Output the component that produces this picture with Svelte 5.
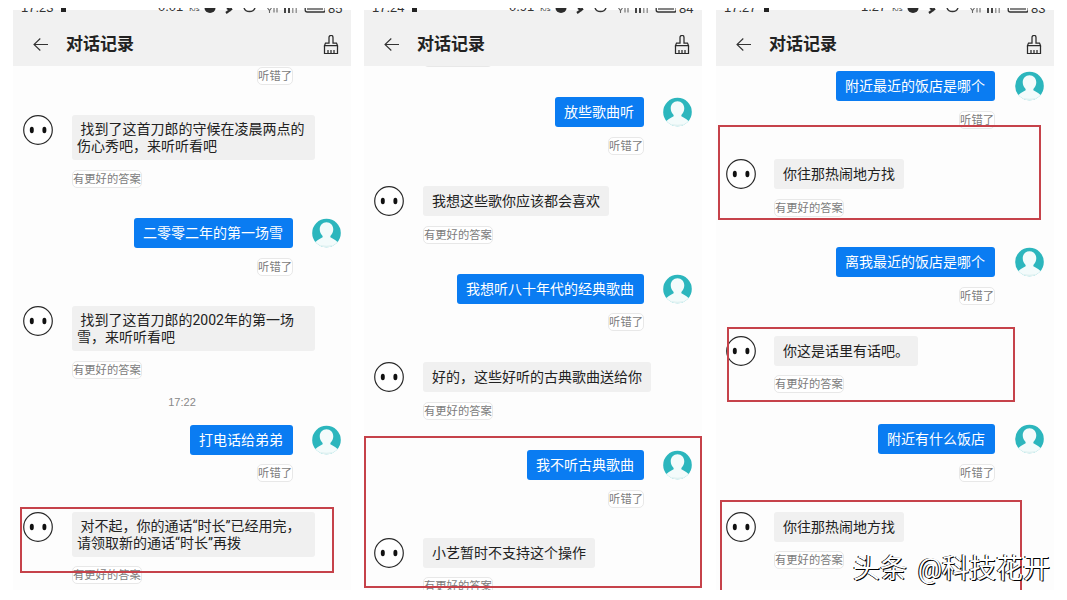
<script>
	// three chat log screenshots side by side
	const tagUser = '听错了';
	const tagBot = '有更好的答案';

	const panels = [
		{
			clock: '17:23',
			speed: '0.01',
			battery: '85',
			items: [
				{ kind: 'tag', side: 'user', gap: 1 },
				{ kind: 'bot', text: ' 找到了这首刀郎的守候在凌晨两点的伤心秀吧，来听听看吧', gap: 30, wide: true },
				{ kind: 'tag', side: 'bot', gap: 10 },
				{ kind: 'user', text: '二零零二年的第一场雪', gap: 30 },
				{ kind: 'tag', side: 'user', gap: 10 },
				{ kind: 'bot', text: ' 找到了这首刀郎的2002年的第一场雪，来听听看吧', gap: 30, wide: true },
				{ kind: 'tag', side: 'bot', gap: 10 },
				{ kind: 'time', text: '17:22', gap: 17 },
				{ kind: 'user', text: '打电话给弟弟', gap: 16 },
				{ kind: 'tag', side: 'user', gap: 9 },
				{ kind: 'bot', text: ' 对不起，你的通话“时长”已经用完，请领取新的通话“时长”再拨', gap: 30, wide: true },
				{ kind: 'tag', side: 'bot', gap: 9 }
			],
			boxes: [{ x: 7, y: 441, w: 314, h: 66 }]
		},
		{
			clock: '17:24',
			speed: '0.91',
			battery: '84',
			items: [
				{ kind: 'tag', side: 'bot', gap: -17 },
				{ kind: 'user', text: '放些歌曲听', gap: 30 },
				{ kind: 'tag', side: 'user', gap: 10 },
				{ kind: 'bot', text: '我想这些歌你应该都会喜欢', gap: 31 },
				{ kind: 'tag', side: 'bot', gap: 10 },
				{ kind: 'user', text: '我想听八十年代的经典歌曲', gap: 30 },
				{ kind: 'tag', side: 'user', gap: 9 },
				{ kind: 'bot', text: '好的，这些好听的古典歌曲送给你', gap: 31 },
				{ kind: 'tag', side: 'bot', gap: 10 },
				{ kind: 'user', text: '我不听古典歌曲', gap: 30 },
				{ kind: 'tag', side: 'user', gap: 10 },
				{ kind: 'bot', text: '小艺暂时不支持这个操作', gap: 30 },
				{ kind: 'tag', side: 'bot', gap: 9 }
			],
			boxes: [{ x: 0, y: 370, w: 338, h: 152 }]
		},
		{
			clock: '17:27',
			speed: '1.27',
			battery: '83',
			items: [
				{ kind: 'user', text: '附近最近的饭店是哪个', gap: 5 },
				{ kind: 'tag', side: 'user', gap: 10 },
				{ kind: 'bot', text: '你往那热闹地方找', gap: 30 },
				{ kind: 'tag', side: 'bot', gap: 10 },
				{ kind: 'user', text: '离我最近的饭店是哪个', gap: 30 },
				{ kind: 'tag', side: 'user', gap: 10 },
				{ kind: 'bot', text: '你这是话里有话吧。', gap: 31 },
				{ kind: 'tag', side: 'bot', gap: 9 },
				{ kind: 'user', text: '附近有什么饭店', gap: 31 },
				{ kind: 'tag', side: 'user', gap: 10 },
				{ kind: 'bot', text: '你往那热闹地方找', gap: 30 },
				{ kind: 'tag', side: 'bot', gap: 9 }
			],
			boxes: [
				{ x: 2, y: 59, w: 323, h: 95 },
				{ x: 11, y: 261, w: 288, h: 75 },
				{ x: 4, y: 434, w: 302, h: 100 }
			]
		}
	];
</script>

{#snippet botFace()}
	<svg class="avatar bot-face" viewBox="0 0 30 30" aria-hidden="true">
		<circle cx="15" cy="15" r="14.3" fill="#fff" stroke="#2a2a2a" stroke-width="1.2" />
		<ellipse cx="8.8" cy="15" rx="2" ry="3.2" fill="#111" />
		<ellipse cx="21.4" cy="15" rx="2" ry="3.2" fill="#111" />
	</svg>
{/snippet}

{#snippet userFace()}
	<svg class="avatar user-face" viewBox="0 0 30 30" aria-hidden="true">
		<circle cx="15" cy="15" r="14.8" fill="#2cb6bd" />
		<path d="M15 3.800c-4 0-7 3-7 7.400 0 2.800 1.200 5.200 3 6.800v1.500c-1.500 1.200-4.500 2-7.500 4.800a14.800 14.800 0 0 0 23 0c-3-2.800-6-3.600-7.500-4.800V18c1.800-1.600 3-4 3-6.800 0-4.400-3-7.400-7-7.400z" fill="#f3fbfb" />
		<path d="M6.500 27a14.800 14.800 0 0 0 17 0c-5 1.500-12 1.500-17 0z" fill="#dff1f1" />
	</svg>
{/snippet}

<main class="page">
	{#each panels as panel}
		<section class="phone">
			<header class="bar">
				<div class="status">
					<span class="clock">{panel.clock}<i class="lock"></i></span>
					<span class="speed">{panel.speed}<small>K/s</small></span>
					<svg class="icons" viewBox="0 0 125 6" aria-hidden="true">
						<ellipse cx="10" cy="0" rx="5.500" ry="5" fill="#2b2b2b" />
						<path d="M26 5l6-4.500M27 0l4 2.500" stroke="#2b2b2b" stroke-width="2.200" fill="none" />
						<path d="M44 0a5.800 5.200 0 0 0 11 0" stroke="#333" stroke-width="1.400" fill="none" />
						<path d="M67.500 0l2 2.500 2-2.500M69.500 3v2M74 0v4.500M77 0v4.500" stroke="#666" stroke-width="1.100" fill="none" />
						<path d="M84 0h2v5h-2zM88 0h2v5h-2z" fill="#444" />
						<path d="M92 0h1.500v5H92zM95.500 0H97v5h-1.500z" fill="#999" />
						<path d="M105.700 0v2a2 2 0 0 0 2 2h16a2 2 0 0 0 2-2V0" fill="none" stroke="#333" stroke-width="1.300" transform="translate(-.5)" />
						<path d="M107 1h16" stroke="#333" stroke-width="1.200" />
					</svg>
					<span class="battery">{panel.battery}</span>
				</div>
				<div class="title-row">
					<svg class="back" viewBox="0 0 15 13" aria-hidden="true">
						<path d="M15 6.500H1M7.300.5 1 6.500l6.300 6" fill="none" stroke="#333" stroke-width="1.100" />
					</svg>
					<h1>对话记录</h1>
					<svg class="broom" viewBox="0 0 16 19" aria-hidden="true">
						<path d="M6 8V2.400a2 2 0 0 1 4 0V8h3.500l1 2.500H1.500l1-2.500zM1.500 10.500v8h13v-8M5 18.500V15M8 18.500V15M11 18.500V15" fill="none" stroke="#2a2a2a" stroke-width="1.250" />
					</svg>
				</div>
			</header>

			<div class="log">
				{#each panel.items as item}
					{#if item.kind === 'tag'}
						<div class="tag-row {item.side}" style="margin-top: {item.gap}px">
							<span class="tag">{item.side === 'user' ? tagUser : tagBot}</span>
						</div>
					{:else if item.kind === 'time'}
						<div class="time" style="margin-top: {item.gap}px">{item.text}</div>
					{:else if item.kind === 'user'}
						<div class="msg user" style="margin-top: {item.gap}px">
							<div class="bubble">{item.text}</div>
							{@render userFace()}
						</div>
					{:else}
						<div class="msg bot" style="margin-top: {item.gap}px">
							{@render botFace()}
							<div class="bubble" class:wide={item.wide}>{item.text}</div>
						</div>
					{/if}
				{/each}

				{#each panel.boxes as box}
					<div class="mark" style="left: {box.x}px; top: {box.y}px; width: {box.w}px; height: {box.h}px"></div>
				{/each}
			</div>
		</section>
	{/each}

	<div class="watermark">头条 @科技花开</div>
</main>

<style>
	:global(body) {
		margin: 0;
		background: #fff;
	}

	.page {
		position: relative;
		width: 1067px;
		height: 600px;
		overflow: hidden;
		display: flex;
		padding-left: 13px;
		gap: 13px;
		box-sizing: border-box;
		font-family: Roboto, "Noto Sans CJK SC", sans-serif;
		color: #222;
	}

	.phone {
		width: 338px;
		height: 590px;
		padding-top: 10px;
		box-sizing: border-box;
		display: flex;
		flex-direction: column;
		flex-shrink: 0;
	}

	.phone:last-of-type {
		margin-left: 1px;
	}

	.phone:last-of-type .msg.bot {
		gap: 18px;
	}

	.phone:last-of-type .msg.user {
		gap: 20px;
	}

	.phone:last-of-type .tag-row.bot {
		padding-left: 58px;
	}

	.phone:last-of-type .tag-row.user {
		padding-right: 59px;
	}

	.bar {
		height: 56px;
		flex-shrink: 0;
		background: #f1f1f1;
		position: relative;
		z-index: 1;
	}

	/* only the lower edge of the status bar survives the crop */
	.status {
		height: 6px;
		margin-top: -2px;
		overflow: hidden;
		display: flex;
		align-items: flex-end;
		padding-left: 8px;
		font-family: "Liberation Sans", sans-serif;
		font-size: 13px;
		line-height: 6px;
		color: #333;
		position: relative;
	}

	.clock,
	.speed,
	.battery {
		transform: translateY(-2px);
		white-space: nowrap;
	}

	.clock {
		width: 137px;
	}

	.lock {
		display: inline-block;
		width: 5px;
		height: 8px;
		margin-left: 7px;
		background: #222;
	}

	.speed {
		width: 50px;
		margin-right: -8px;
	}

	.speed small {
		font-size: 7px;
		margin-left: 6px;
	}

	.icons {
		width: 125px;
		height: 6px;
		flex-shrink: 0;
		margin-right: 3px;
	}

	.title-row {
		display: flex;
		align-items: center;
		height: 24px;
		margin-top: 18px;
		padding: 0 12px 0 20px;
	}

	.back {
		width: 15px;
		height: 13px;
	}

	.title-row h1 {
		margin: 0 0 0 18px;
		flex: 1;
		font-size: 17px;
		line-height: 24px;
		font-weight: 700;
		color: #222;
	}

	.broom {
		width: 16px;
		height: 19px;
	}

	.log {
		position: relative;
		flex: 1;
		min-height: 0;
		overflow: hidden;
		background: #fdfdfd;
		display: flex;
		flex-direction: column;
	}

	.msg {
		display: flex;
		align-items: flex-start;
		flex-shrink: 0;
	}

	.msg.bot {
		padding-left: 10px;
		gap: 19px;
	}

	.msg.user {
		justify-content: flex-end;
		padding-right: 10px;
		gap: 19px;
	}

	.avatar {
		height: 30px;
		flex-shrink: 0;
	}

	.bot-face {
		width: 30px;
	}

	.user-face {
		width: 29px;
	}

	.bubble {
		font-size: 14px;
		line-height: 17px;
		padding: 7px 9px 6px;
		border-radius: 3px;
		box-sizing: border-box;
		white-space: pre-wrap;
	}

	.bot .bubble {
		background: #f0f0f0;
		color: #222;
	}

	.bot .bubble.wide {
		width: 243px;
		padding: 6px 5px 5px;
	}

	.user .bubble {
		background: #0a7cf2;
		color: #fff;
		padding-right: 10px;
	}

	.tag-row {
		display: flex;
		flex-shrink: 0;
	}

	.tag-row.user {
		justify-content: flex-end;
		padding-right: 58px;
	}

	.tag-row.bot {
		padding-left: 59px;
	}

	.tag {
		height: 18px;
		box-sizing: border-box;
		border: 1px solid #e8e8e8;
		border-radius: 5px;
		font-size: 11.300px;
		line-height: 18px;
		color: #7c7c7c;
		background: #fff;
		white-space: nowrap;
	}

	.time {
		text-align: center;
		font-family: "Liberation Sans", sans-serif;
		font-size: 11px;
		line-height: 13px;
		color: #888;
		flex-shrink: 0;
	}

	.mark {
		position: absolute;
		box-sizing: border-box;
		border: 2px solid #c6424a;
		pointer-events: none;
	}

	.watermark {
		position: absolute;
		right: 17px;
		top: 553px;
		font-size: 27px;
		line-height: 32px;
		word-spacing: 4px;
		color: #fff;
		white-space: nowrap;
		text-shadow: 1px 1px 0 #000, -1px 0 0 #000;
		z-index: 2;
	}
</style>
